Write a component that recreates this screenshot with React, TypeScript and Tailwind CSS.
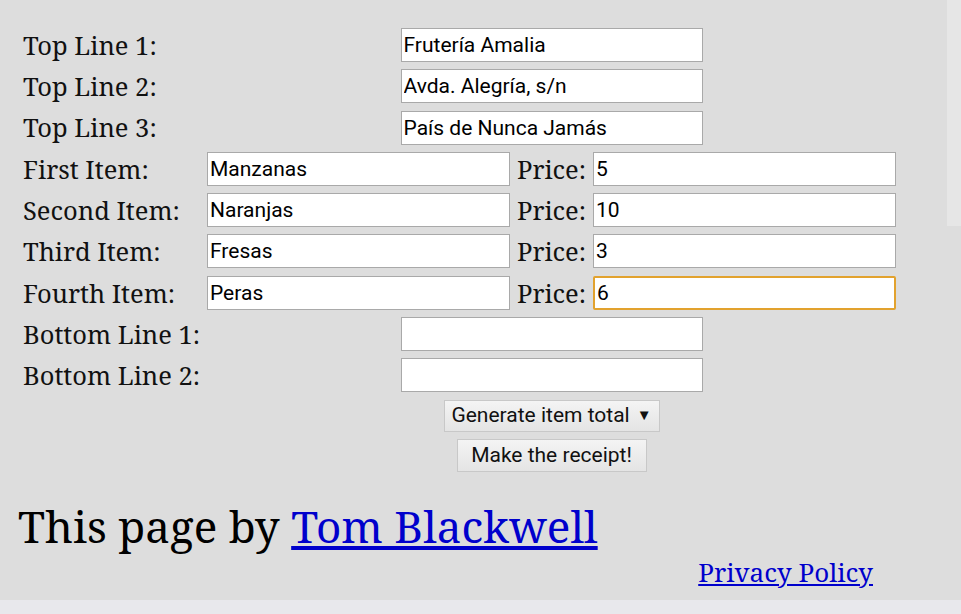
import { useState } from "react";

const labelFont = "font-['Noto_Serif','DejaVu_Serif',serif]";

const inputCls =
  "h-[34px] bg-white border border-[#a9a9a9] px-[2px] text-[21px] text-black font-['Roboto',sans-serif] outline-none focus:border-2 focus:border-[#e2a22e] focus:rounded-[2px]";

function Row({ label, children }: { label: string; children: any }) {
  return (
    <div className="flex items-center h-[34px] mb-[7.3px]">
      <label className={`w-[184px] shrink-0 text-[25.5px] text-[#111] ${labelFont}`}>{label}</label>
      {children}
    </div>
  );
}

export default function App() {
  const [top, setTop] = useState(["Frutería Amalia", "Avda. Alegría, s/n", "País de Nunca Jamás"]);
  const [items, setItems] = useState([
    { name: "Manzanas", price: "5" },
    { name: "Naranjas", price: "10" },
    { name: "Fresas", price: "3" },
    { name: "Peras", price: "6" },
  ]);
  const itemLabels = ["First Item:", "Second Item:", "Third Item:", "Fourth Item:"];

  const setItem = (i: number, key: "name" | "price", v: string) => {
    const next = items.slice();
    next[i] = { ...next[i], [key]: v };
    setItems(next);
  };

  return (
    <div className="min-h-screen bg-[#e8e8ec]">
      <div className="relative h-[600px] bg-[#dddddd]">
        <div className="absolute right-0 top-0 w-[14px] h-[226px] bg-[#e6e6e6]" />
        <form className="pt-[28px] pl-[23px]" onSubmit={(e) => e.preventDefault()}>
          {top.map((v, i) => (
            <Row key={i} label={`Top Line ${i + 1}:`}>
              <div className="w-[689px] flex justify-center">
                <input
                  className={`${inputCls} w-[302px]`}
                  value={v}
                  onChange={(e) => {
                    const n = top.slice();
                    n[i] = e.target.value;
                    setTop(n);
                  }}
                />
              </div>
            </Row>
          ))}
          {items.map((it, i) => (
            <Row key={i} label={itemLabels[i]}>
              <input
                className={`${inputCls} w-[303px]`}
                value={it.name}
                onChange={(e) => setItem(i, "name", e.target.value)}
              />
              <span className={`ml-[7px] w-[76px] shrink-0 text-[25.5px] text-[#111] ${labelFont}`}>Price:</span>
              <input
                className={`${inputCls} w-[303px] ${i === 3 ? "border-2 border-[#e2a22e] rounded-[2px]" : ""}`}
                value={it.price}
                onChange={(e) => setItem(i, "price", e.target.value)}
              />
            </Row>
          ))}
          {["Bottom Line 1:", "Bottom Line 2:"].map((l) => (
            <Row key={l} label={l}>
              <div className="w-[689px] flex justify-center">
                <input className={`${inputCls} w-[302px]`} />
              </div>
            </Row>
          ))}
          <div className="ml-[184px] w-[689px] flex flex-col items-center gap-[7px]">
            <button
              type="button"
              className="h-[32px] w-[216px] flex items-center justify-center gap-[7px] border border-[#c8c8c8] bg-gradient-to-b from-[#f4f4f4] to-[#e4e4e4] text-[21px] text-[#111] font-['Roboto',sans-serif]"
            >
              Generate item total <span className="text-[15px]">▼</span>
            </button>
            <button
              type="submit"
              className="h-[33px] w-[190px] border border-[#c8c8c8] bg-gradient-to-b from-[#f4f4f4] to-[#e4e4e4] text-[21px] text-[#111] font-['Roboto',sans-serif]"
            >
              Make the receipt!
            </button>
          </div>
        </form>
        <div className={`mt-[32px] pl-[18px] text-[44px] leading-none text-black ${labelFont}`}>
          This page by{" "}
          <a href="#" className="text-[#0000cc] underline">
            Tom Blackwell
          </a>
        </div>
        <div className="mt-[5px] w-[873px] text-right">
          <a href="#" className={`text-[26px] text-[#0000cc] underline ${labelFont}`}>
            Privacy Policy
          </a>
        </div>
      </div>
    </div>
  );
}
